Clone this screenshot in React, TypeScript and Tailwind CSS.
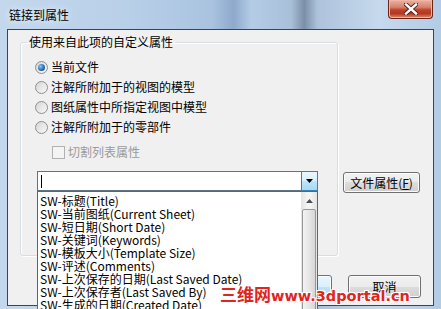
import React from 'react';

const items = [
  'SW-标题(Title)',
  'SW-当前图纸(Current Sheet)',
  'SW-短日期(Short Date)',
  'SW-关键词(Keywords)',
  'SW-模板大小(Template Size)',
  'SW-评述(Comments)',
  'SW-上次保存的日期(Last Saved Date)',
  'SW-上次保存者(Last Saved By)',
  'SW-生成的日期(Created Date)',
  'SW-生成的时间(Created Time)',
];

function Radio({ checked }: { checked?: boolean }) {
  return (
    <span className="w-[13px] h-[13px] rounded-full border border-[#8f8f8f] bg-[linear-gradient(135deg,#d6d6d6,#f8f8f8)] flex items-center justify-center shrink-0">
      {checked && (
        <span className="w-[7px] h-[7px] rounded-full bg-[radial-gradient(circle_at_35%_35%,#8ccaf5,#2a6fb3_55%,#0f3f78)]" />
      )}
    </span>
  );
}

function WinButton({ children, className = '', primary = false }: { children: React.ReactNode; className?: string; primary?: boolean }) {
  return (
    <div
      className={
        'flex items-center justify-center rounded-[3px] border text-[12px] text-black shadow-[inset_0_0_0_1px_#fcfcfc] ' +
        (primary
          ? 'border-[#3c7fb1] bg-[linear-gradient(#eaf6fd_0%,#d9f0fc_50%,#bee6fd_50%,#a7d9f5_100%)] '
          : 'border-[#707070] bg-[linear-gradient(#f2f2f2_0%,#ebebeb_50%,#dddddd_50%,#cfcfcf_100%)] ') +
        className
      }
    >
      {children}
    </div>
  );
}

export default function App() {
  return (
    <div className="relative w-[441px] h-[309px] overflow-hidden font-['Noto_Sans_CJK_SC',sans-serif] text-[12px] text-black bg-[linear-gradient(90deg,#c4d8ed_0%,#b8cfe8_30%,#a9c3e0_48%,#8ea9cc_53%,#b4cce6_57%,#a9c0d9_66%,#7b90a8_69%,#adc3db_72%,#c6d9ed_86%,#b3cbe5_100%)]">
      {/* title bar */}
      <div className="h-[29px] flex items-center pl-[9px] relative">
        <span className="leading-[16px] [text-shadow:0_0_6px_#ffffff]">链接到属性</span>
        <div className="absolute top-0 left-[388px] w-[45px] h-[19px] rounded-b-[4px] border border-t-0 border-[#6b2418] bg-[linear-gradient(#eab3a6_0%,#d7816c_40%,#c0422a_55%,#b7361f_75%,#e08a6f_100%)] flex items-center justify-center shadow-[inset_0_0_0_1px_#f0b6a6]">
          <svg width="14" height="12" viewBox="0 0 14 12">
            <path d="M2 1.5 L12 10.5 M12 1.5 L2 10.5" stroke="#4a1a12" strokeWidth="4.2" strokeLinecap="square" />
            <path d="M2 1.5 L12 10.5 M12 1.5 L2 10.5" stroke="#ffffff" strokeWidth="2.4" strokeLinecap="square" />
          </svg>
        </div>
      </div>

      {/* client area */}
      <div className="mx-[7px] h-[277px] border border-[#34465c] bg-[#f0f0f0] flex flex-col pl-[12px] pr-[12px] pt-[4px]">
        <div className="flex items-start">
          <fieldset className="w-[318px] h-[222px] p-0 m-0 border border-[#d5dfe5] rounded-[3px] shadow-[inset_1px_1px_0_#ffffff,1px_1px_0_#ffffff]">
            <legend className="ml-[6px] px-[2px] leading-[16px]">使用来自此项的自定义属性</legend>
            <div className="pl-[14px] pt-[7px] flex flex-col">
              <div className="h-[20px] flex items-center gap-[3px]">
                <Radio checked />
                <span className="leading-[16px]">当前文件</span>
              </div>
              <div className="h-[20px] flex items-center gap-[3px]">
                <Radio />
                <span className="leading-[16px]">注解所附加于的视图的模型</span>
              </div>
              <div className="h-[20px] flex items-center gap-[3px]">
                <Radio />
                <span className="leading-[16px]">图纸属性中所指定视图中模型</span>
              </div>
              <div className="h-[20px] flex items-center gap-[3px]">
                <Radio />
                <span className="leading-[16px]">注解所附加于的零部件</span>
              </div>
              <div className="h-[20px] mt-[5px] pl-[17px] flex items-center gap-[3px]">
                <span className="w-[13px] h-[13px] border border-[#b1b1b1] bg-[#f4f4f4] shrink-0" />
                <span className="leading-[16px] text-[#9a9a9a]">切割列表属性</span>
              </div>

              {/* combo box */}
              <div className="relative mt-[9px] ml-[2px] w-[281px] h-[20px] border border-[#5f7389] bg-white flex items-center">
                <span className="ml-[3px] w-px h-[13px] bg-black" />
                <div className="absolute right-[-1px] top-[-1px] w-[17px] h-[20px] border border-[#3c7fb1] bg-[linear-gradient(#eaf6fd_0%,#d9f0fc_50%,#bee6fd_50%,#a7d9f5_100%)] flex items-center justify-center">
                  <svg width="7" height="4" viewBox="0 0 7 4">
                    <path d="M0 0 H7 L3.5 4 Z" fill="#000" />
                  </svg>
                </div>

                {/* open list */}
                <div className="absolute left-[-1px] top-[19px] w-[281px] h-[130px] border border-[#646464] bg-white flex z-10">
                  <div className="flex-1 pt-[2px] pl-[2px] flex flex-col">
                    {items.map((t) => (
                      <div key={t} className="leading-[13px] whitespace-nowrap">
                        {t}
                      </div>
                    ))}
                  </div>
                  <div className="w-[16px] bg-[linear-gradient(90deg,#e3e3e3,#f4f4f4_40%,#f4f4f4_60%,#e3e3e3)] flex flex-col items-center">
                    <div className="h-[17px] w-full flex items-center justify-center">
                      <svg width="7" height="4" viewBox="0 0 7 4">
                        <path d="M0 4 H7 L3.5 0 Z" fill="#4d4d4d" />
                      </svg>
                    </div>
                    <div className="w-[14px] flex-1 rounded-[2px] border border-[#979797] bg-[linear-gradient(90deg,#f3f3f3,#e6e6e6_50%,#d6d6d6)]" />
                  </div>
                </div>
              </div>
            </div>
          </fieldset>

          <WinButton className="ml-[5px] mt-[138px] w-[77px] h-[21px]">
            文件属性(<u>F</u>)
          </WinButton>
        </div>

        <div className="mt-[19px] flex justify-end gap-[16px]">
          <WinButton primary className="w-[75px] h-[23px]">确定</WinButton>
          <WinButton className="w-[73px] h-[23px]">取消</WinButton>
        </div>
      </div>

      {/* watermark */}
      <div className="absolute left-[220px] top-[284px] flex items-baseline text-[#e0241e] font-bold z-20 [text-shadow:-1px_-1px_0_#fff,1px_-1px_0_#fff,-1px_1px_0_#fff,1px_1px_0_#fff,0_0_2px_#fff]">
        <span className="text-[17px] leading-[20px]">三维网</span>
        <span className="font-['DejaVu_Sans',sans-serif] text-[14.5px] leading-[20px]">www.3dportal.cn</span>
      </div>
    </div>
  );
}
